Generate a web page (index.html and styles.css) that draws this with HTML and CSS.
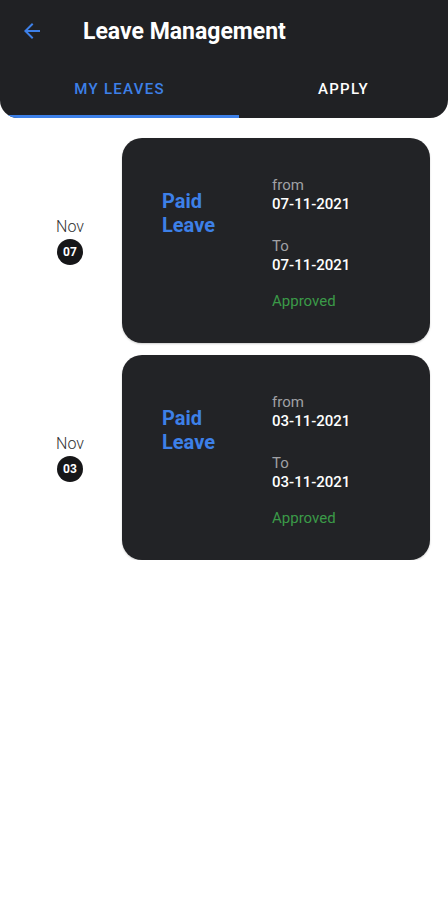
FILE: index.html
```html
<!DOCTYPE html>
<html lang="en">
<head>
  <meta charset="UTF-8" />
  <meta name="viewport" content="width=device-width, initial-scale=1.0"/>
  <title>Leave Management</title>
  <link rel="stylesheet" href="styles.css">
</head>
<body>

  <header class="appbar">
    <div class="toolbar">
      <svg class="back" width="24" height="24" viewBox="0 0 24 24">
        <path d="M20 11H7.83l5.59-5.59L12 4l-8 8 8 8 1.41-1.41L7.83 13H20v-2z" fill="currentColor"/>
      </svg>
      <h1 class="title">Leave Management</h1>
    </div>
    <nav class="tabs">
      <div class="tab active">MY LEAVES</div>
      <div class="tab">APPLY</div>
    </nav>
  </header>

  <main class="list">
    <div class="row">
      <div class="date">
        <span class="month">Nov</span>
        <span class="day">07</span>
      </div>
      <div class="card">
        <div class="type">Paid<br>Leave</div>
        <div class="info">
          <span class="lbl">from</span>
          <span class="val">07-11-2021</span>
          <span class="lbl gap">To</span>
          <span class="val">07-11-2021</span>
          <span class="status">Approved</span>
        </div>
      </div>
    </div>

    <div class="row">
      <div class="date">
        <span class="month">Nov</span>
        <span class="day">03</span>
      </div>
      <div class="card">
        <div class="type">Paid<br>Leave</div>
        <div class="info">
          <span class="lbl">from</span>
          <span class="val">03-11-2021</span>
          <span class="lbl gap">To</span>
          <span class="val">03-11-2021</span>
          <span class="status">Approved</span>
        </div>
      </div>
    </div>
  </main>

</body>
</html>
```

FILE: styles.css
```css
body {
  margin: 0;
  font-family: Roboto, "Noto Sans", sans-serif;
  background: #fff;
}
.appbar {
  background: #202124;
  border-radius: 0 0 18px 18px;
  overflow: hidden;
}
.toolbar {
  display: flex;
  align-items: center;
  height: 62px;
  padding-left: 20px;
}
.back {
  color: #3d80e8;
}
.title {
  margin: 0 0 0 39px;
  color: #fff;
  font-size: 23px;
  font-weight: 700;
}
.tabs {
  display: flex;
  height: 56px;
}
.tab {
  flex: 1;
  display: flex;
  align-items: center;
  justify-content: center;
  padding-top: 1px;
  color: #fff;
  font-size: 15px;
  font-weight: 500;
  letter-spacing: 1.3px;
  border-bottom: 3px solid transparent;
  box-sizing: border-box;
}
.tab.active {
  flex: 0 0 239px;
  color: #3d80e8;
  border-bottom-color: #3d80e8;
}
.list {
  display: flex;
  flex-direction: column;
  gap: 12px;
  padding: 20px 18px 0 22px;
}
.row {
  display: flex;
  align-items: center;
}
.date {
  width: 96px;
  display: flex;
  flex-direction: column;
  align-items: center;
  gap: 3px;
}
.month {
  font-size: 16px;
  font-weight: 300;
  color: #333;
}
.day {
  width: 26px;
  height: 26px;
  border-radius: 50%;
  background: #161618;
  color: #fff;
  font-size: 12px;
  font-weight: 700;
  display: flex;
  align-items: center;
  justify-content: center;
}
.card {
  flex: 1;
  margin-left: 4px;
  background: #222326;
  border-radius: 20px;
  display: flex;
  padding: 38px 0 32px 40px;
  box-shadow: 0 1px 2px rgba(0,0,0,0.2);
}
.type {
  width: 110px;
  margin-top: 13px;
  color: #3d80e8;
  font-size: 20px;
  font-weight: 700;
  line-height: 24px;
}
.info {
  display: flex;
  flex-direction: column;
}
.lbl {
  color: #a0a0a4;
  font-size: 15px;
  line-height: 19px;
}
.lbl.gap {
  margin-top: 23px;
}
.val {
  color: #fff;
  font-size: 15px;
  font-weight: 500;
  line-height: 19px;
}
.status {
  margin-top: 17px;
  color: #3b9a48;
  font-size: 15px;
  line-height: 19px;
}
```
